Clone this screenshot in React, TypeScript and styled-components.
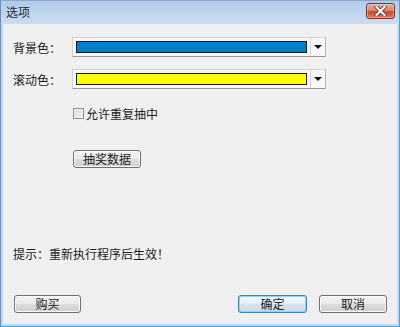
import React, { useState } from 'react'
import styled, { createGlobalStyle } from 'styled-components'

const GlobalStyle = createGlobalStyle`
  html, body {
    margin: 0;
    padding: 0;
    background: #ffffff;
  }
  body {
    font-family: "Noto Sans CJK SC", "Liberation Sans", sans-serif;
    font-size: 12px;
    color: #1b1b1b;
  }
`

const Window = styled.div`
  width: 400px;
  height: 327px;
  box-sizing: border-box;
  display: flex;
  flex-direction: column;
  background: #c4d8ef;
  border: 1px solid #6b8fb8;
  border-top-color: #8fa9c9;
  border-bottom-color: #4aa3da;
  border-right-color: #4aa3da;
`

const TitleBar = styled.div`
  height: 23px;
  display: flex;
  align-items: center;
  justify-content: space-between;
  padding: 0 4px 0 5px;
  background: linear-gradient(to bottom, #b3cbe8 0%, #c2d6ee 60%, #cadcf1 100%);
`

const Title = styled.span`
  font-size: 12px;
  line-height: 14px;
  color: #1e2a3a;
  margin-top: -1px;
`

const CloseButton = styled.button`
  width: 29px;
  height: 16px;
  margin-top: -3px;
  padding: 0;
  border: 1px solid #7a3426;
  border-radius: 3px;
  background: linear-gradient(to bottom, #e9ad9f 0%, #dc8670 45%, #c8472e 55%, #dc7a60 100%);
  box-shadow: inset 0 0 0 1px rgba(255, 255, 255, 0.35);
  display: flex;
  align-items: center;
  justify-content: center;
`

const Client = styled.div`
  flex: 1;
  margin: 0 2px 2px 2px;
  background: #f0f0f0;
  display: flex;
  flex-direction: column;
  padding: 13px 10px 11px 10px;
`

const FieldRow = styled.div`
  display: flex;
  align-items: center;
  height: 20px;
  margin-bottom: 12px;
`

const Label = styled.span`
  width: 59px;
  font-size: 12px;
`

const Combo = styled.div`
  width: 254px;
  height: 20px;
  box-sizing: border-box;
  display: flex;
  align-items: center;
  border: 1px solid #d4d4d4;
  border-bottom-color: #9a9a9a;
  border-right-color: #b5b5b5;
  background: #f7f7f7;
  padding: 0 0 0 3px;
`

const Swatch = styled.div<{ $color: string }>`
  width: 231px;
  height: 12px;
  box-sizing: border-box;
  background: ${(p) => p.$color};
  border: 1px solid #1a1a1a;
`

const Arrow = styled.div`
  flex: 1;
  height: 100%;
  margin-left: 3px;
  border-left: 1px solid #d8d8d8;
  display: flex;
  align-items: center;
  justify-content: center;
  &::after {
    content: '';
    border-left: 4px solid transparent;
    border-right: 4px solid transparent;
    border-top: 4px solid #111;
  }
`

const CheckRow = styled.label`
  display: flex;
  align-items: center;
  margin: 6px 0 0 60px;
  height: 12px;
  font-size: 12px;
  cursor: default;
`

const CheckBox = styled.span<{ $checked: boolean }>`
  width: 11px;
  height: 11px;
  box-sizing: border-box;
  border: 1px solid #8f8f8f;
  background: linear-gradient(135deg, #dcdcdc 0%, #f4f4f4 100%);
  box-shadow: inset 0 0 0 1px #f2f2f2;
  margin-right: 2px;
  display: flex;
  align-items: center;
  justify-content: center;
  font-size: 9px;
  color: #222;
`

const Button = styled.button<{ $default?: boolean; $width?: number }>`
  width: ${(p) => p.$width || 68}px;
  height: 18px;
  padding: 0;
  font-family: inherit;
  font-size: 12px;
  line-height: 14px;
  color: #1b1b1b;
  border-radius: 3px;
  border: 1px solid ${(p) => (p.$default ? '#3c7fb1' : '#707070')};
  background: ${(p) =>
    p.$default
      ? 'linear-gradient(to bottom, #f4f8fb 0%, #e6eef5 48%, #d6e3ee 52%, #cddbe8 100%)'
      : 'linear-gradient(to bottom, #f2f2f2 0%, #ebebeb 48%, #dddddd 52%, #cfcfcf 100%)'};
  box-shadow: ${(p) => (p.$default ? 'inset 0 0 0 1px #8fd3f5' : 'inset 0 0 0 1px #fbfbfb')};
`

const DataButton = styled(Button)`
  margin: 31px 0 0 60px;
`

const Hint = styled.div`
  margin-top: 79px;
  font-size: 12px;
  line-height: 14px;
`

const Footer = styled.div`
  margin-top: auto;
  display: flex;
  align-items: center;
  padding-left: 1px;
`

const Spacer = styled.div`
  flex: 1;
`

const Gap = styled.div`
  width: 12px;
`

const App = () => {
  const [repeat, setRepeat] = useState(false)

  return (
    <>
      <GlobalStyle />
      <Window>
        <TitleBar>
          <Title>选项</Title>
          <CloseButton aria-label="close">
            <svg width="13" height="10" viewBox="0 0 13 10">
              <path d="M2.5 1 L10.5 9 M10.5 1 L2.5 9" stroke="#5a1f14" strokeWidth="3.6" strokeLinecap="square" />
              <path d="M2.5 1 L10.5 9 M10.5 1 L2.5 9" stroke="#ffffff" strokeWidth="2.2" strokeLinecap="square" />
            </svg>
          </CloseButton>
        </TitleBar>
        <Client>
          <FieldRow>
            <Label>背景色：</Label>
            <Combo>
              <Swatch $color="#0080c8" />
              <Arrow />
            </Combo>
          </FieldRow>
          <FieldRow>
            <Label>滚动色：</Label>
            <Combo>
              <Swatch $color="#ffff00" />
              <Arrow />
            </Combo>
          </FieldRow>
          <CheckRow onClick={() => setRepeat(!repeat)}>
            <CheckBox $checked={repeat}>{repeat ? '✓' : ''}</CheckBox>
            允许重复抽中
          </CheckRow>
          <DataButton>抽奖数据</DataButton>
          <Hint>提示：重新执行程序后生效！</Hint>
          <Footer>
            <Button $width={67}>购买</Button>
            <Spacer />
            <Button $default $width={69}>确定</Button>
            <Gap />
            <Button>取消</Button>
          </Footer>
        </Client>
      </Window>
    </>
  )
}

export default App
